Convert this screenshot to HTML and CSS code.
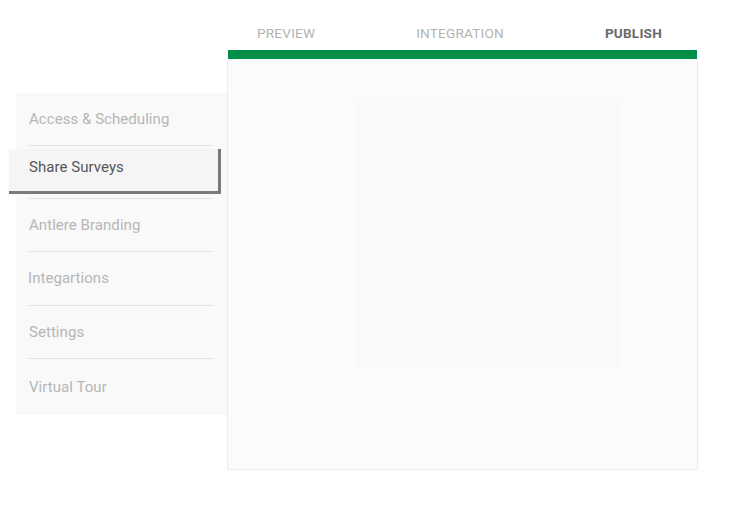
FILE: index.html
```html
<!DOCTYPE html>
<html lang="en">
<head>
<meta charset="utf-8">
<title>Publish</title>
<link rel="stylesheet" href="styles.css">
</head>
<body>
<div class="layout">
  <nav class="sidebar">
    <div class="item"><span class="label">Access &amp; Scheduling</span></div>
    <div class="item item-active"><div class="active-box"><span class="label">Share Surveys</span></div></div>
    <div class="item"><span class="label">Antlere Branding</span></div>
    <div class="item item-shift"><span class="label">Integartions</span></div>
    <div class="item"><span class="label">Settings</span></div>
    <div class="item item-last"><span class="label">Virtual Tour</span></div>
  </nav>
  <main class="main">
    <div class="tabs">
      <span class="tab">PREVIEW</span>
      <span class="tab">INTEGRATION</span>
      <span class="tab tab-active">PUBLISH</span>
    </div>
    <div class="progress"></div>
    <div class="panel">
      <div class="preview-box"></div>
    </div>
  </main>
</div>
</body>
</html>
```
FILE: styles.css
```css
* { box-sizing: border-box; }
html, body { margin: 0; padding: 0; background: #ffffff; }
body { font-family: Roboto, "Open Sans", Arial, sans-serif; }

.layout {
  display: flex;
  align-items: flex-start;
  padding-left: 16px;
}

.sidebar {
  width: 211px;
  margin-top: 93px;
  background: #f9f9f9;
  padding: 0 14px 0 13px;
}

.item {
  height: 53px;
  border-bottom: 1px solid #e0e0e0;
  display: flex;
  align-items: center;
  padding-bottom: 1px;
}
.item-shift { height: 54px; }
.item-last { border-bottom: none; height: 56px; }
.item-shift .label { margin-left: -1px; }

.label {
  font-size: 15px;
  color: #b6b6b6;
  letter-spacing: 0.05px;
}

.item-active { align-items: flex-start; }
.active-box {
  margin: 3px -8px 0 -20px;
  width: calc(100% + 28px);
  height: 45px;
  padding: 0 0 6px 20px;
  display: flex;
  align-items: center;
  background: #f5f5f5;
  border-right: 3px solid #7a7a7a;
  border-bottom: 3px solid #7a7a7a;
}
.active-box .label { color: #555555; }

.main {
  width: 471px;
  display: flex;
  flex-direction: column;
}

.tabs {
  height: 50px;
  display: flex;
  justify-content: space-between;
  align-items: flex-start;
  padding: 25px 36px 0 30px;
}
.tab {
  font-size: 13.6px;
  line-height: 16px;
  color: #b3b3b3;
  letter-spacing: 0.2px;
}
.tab-active { color: #6a6a6a; font-weight: 700; }

.progress {
  height: 9px;
  margin: 0 1px;
  background: #008f49;
}

.panel {
  height: 411px;
  background: #fbfbfd;
  border: 1px solid #ececec;
  border-top: none;
  padding: 44px 0 0 129px;
}

.preview-box {
  width: 262px;
  height: 264px;
  background: #f9f9f9;
}
```
